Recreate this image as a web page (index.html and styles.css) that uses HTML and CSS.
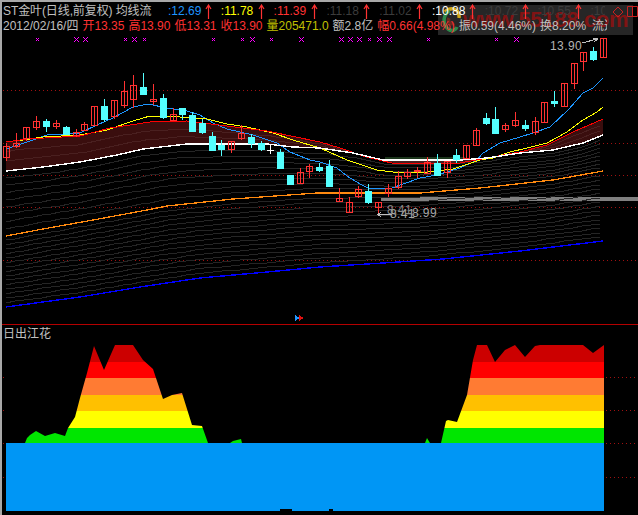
FILE: index.html
```html
<!DOCTYPE html>
<html lang="zh">
<head>
<meta charset="utf-8">
<title>金叶 K线</title>
<link rel="stylesheet" href="styles.css">
</head>
<body>
<div class="app">
  <section class="main">
    <header class="head">
      <div class="row row1">
        <div class="title">ST金叶(日线,前复权) 均线流</div>
        <div class="ma blue">:12.69<svg class="up" viewBox="0 0 7 15"><path d="M3.5 15V1M1 5L3.5 1L6 5"/></svg></div>
        <div class="ma yellow">:11.78<svg class="up" viewBox="0 0 7 15"><path d="M3.5 15V1M1 5L3.5 1L6 5"/></svg></div>
        <div class="ma red">:11.39<svg class="up" viewBox="0 0 7 15"><path d="M3.5 15V1M1 5L3.5 1L6 5"/></svg></div>
        <div class="ma dim">:11.18<svg class="up" viewBox="0 0 7 15"><path d="M3.5 15V1M1 5L3.5 1L6 5"/></svg></div>
        <div class="ma dim">:11.02<svg class="up" viewBox="0 0 7 15"><path d="M3.5 15V1M1 5L3.5 1L6 5"/></svg></div>
        <div class="ma white">:10.88<svg class="up" viewBox="0 0 7 15"><path d="M3.5 15V1M1 5L3.5 1L6 5"/></svg></div>
        <div class="ma dim">:10.72<svg class="up" viewBox="0 0 7 15"><path d="M3.5 15V1M1 5L3.5 1L6 5"/></svg></div>
        <div class="ma dim">:10.55<svg class="up" viewBox="0 0 7 15"><path d="M3.5 15V1M1 5L3.5 1L6 5"/></svg></div>
        <div class="ma dim last">:10.39</div>
        <svg class="tools" viewBox="0 0 26 12"><path d="M6 1L11 6L6 11L1 6Z"/><path d="M15.5 .5H25.5V10.5H15.5ZM20.5 .5V10.5"/></svg>
      </div>
      <div class="row row2">
        <span class="gray">2012/02/16/四</span>
        <span class="red">开13.35</span>
        <span class="red">高13.90</span>
        <span class="red">低13.31</span>
        <span class="red">收13.90</span>
        <span class="olive">量205471.0</span>
        <span class="gray">额2.8亿</span>
        <span class="red">幅0.66(4.98%)</span>
        <span class="gray">振0.59(4.46%)</span>
        <span class="gray">换8.20%</span>
        <span class="gray clip">流通</span>
      </div>
    </header>
    <svg id="kline" class="plot kline" viewBox="2 31 636 293"></svg>
    <span class="note high">13.90</span>
    <span class="note low back">8.41</span>
    <span class="note low front">8.41</span>
    <span class="note low range">8.99</span>
    <div class="mark">
      <svg class="logo" viewBox="0 0 20 28">
        <path class="swirl-y" d="M4 6C10 0 19 3 18 12"/>
        <path class="swirl-g" d="M9 5C2 8 1 18 7 23C11 26 15 24 16 21"/>
        <path class="swirl-d" d="M8 12C6 16 10 19 13 17"/>
      </svg>
      <span class="site">www.55188.com</span>
    </div>
  </section>
  <section class="sub">
    <div class="sub-title">日出江花</div>
    <svg id="flow" class="plot flow" viewBox="2 325 636 190"></svg>
  </section>
</div>
<script src="chart.js"></script>
</body>
</html>
```
FILE: styles.css
```css
* { box-sizing: border-box; }
html, body { margin: 0; padding: 0; background: #000; }
body { width: 638px; height: 515px; overflow: hidden; }
.app {
  width: 638px; height: 515px;
  background: #000;
  border-top: 2px solid #a8a8a8;
  border-left: 2px solid #a8a8a8;
  display: flex; flex-direction: column;
  font: 12px/14px "Liberation Sans", "Noto Sans CJK SC", sans-serif;
  color: #c0c0c0;
}
.main { position: relative; height: 322px; flex: none; }
.head { height: 29px; padding: 2px 0 0 1px; position: relative; z-index: 2; }
.row { display: flex; white-space: nowrap; height: 14px; }
.row1 { align-items: flex-start; position: relative; }
.row2 { gap: 4px; margin-top: 0; padding-top: 1px; height: 15px; }
.title { width: 165px; flex: none; letter-spacing: -.1px; }
.ma { width: 52.8px; flex: none; position: relative; }
.ma.last { width: 15px; overflow: hidden; }
.up { position: absolute; left: 37px; top: 0; width: 7px; height: 15px; fill: none; stroke: #ff3232; stroke-width: 1.2; }
.tools { width: 26px; height: 12px; margin: 2px 0 0 7px; flex: none; fill: none; stroke: #c82020; stroke-width: 1; }
.blue { color: #1e96ff; }
.yellow { color: #ffff00; }
.red { color: #ff3232; }
.white { color: #fff; }
.dim { color: #3c3c3c; }
.gray { color: #c0c0c0; }
.olive { color: #c0c000; }
.clip { width: 15px; overflow: hidden; flex: none; margin-left: 2px; }
.plot { display: block; width: 636px; shape-rendering: crispEdges; }
.kline { height: 293px; }
.flow { height: 190px; }
.note { position: absolute; color: #b4b4b4; letter-spacing: .4px; }
.high { left: 548px; top: 37px; }
.low { color: #a8a8a8; }
.back { left: 385px; top: 201px; opacity: .8; }
.front { left: 388px; top: 205px; }
.range { left: 410px; top: 204px; }
.mark {
  position: absolute; left: 436px; top: 3px; z-index: 1;
  width: 195px; height: 30px;
  background: #262626;
  display: flex; align-items: center;
  overflow: hidden;
}
.logo { width: 20px; height: 28px; flex: none; margin-left: 3px; fill: none; stroke-width: 3.5; }
.swirl-y { stroke: #d0a818; }
.swirl-g { stroke: #2c8a4a; }
.swirl-d { stroke: #6a2a20; }
.site {
  margin-left: 2px;
  font: bold 22px/28px "Liberation Sans", sans-serif;
  letter-spacing: -.3px;
  color: #801414;
}
.sub { position: relative; flex: 1; border-top: 1px solid #b40000; }
.sub-title { position: absolute; left: 1px; top: 2px; color: #c0c0c0; }
.guide { stroke: #a01010; stroke-dasharray: 1 3; fill: none; }
.grid { stroke: #252525; fill: none; }
.grid-in { stroke: #4a2020; fill: none; }
.l-blue { stroke: #1e96ff; fill: none; }
.l-yellow { stroke: #ffff00; fill: none; }
.l-red { stroke: #ff0000; fill: none; }
.l-white { stroke: #ffffff; fill: none; stroke-width: 1.4; }
.l-orange { stroke: #ff8a10; fill: none; stroke-width: 1.3; }
.l-deep { stroke: #0000ff; fill: none; stroke-width: 1.4; }
.band { fill: #3a0e0e; }
.band-g { fill: #1c361c; }
.bar { fill: #808080; }
.up-c { fill: none; stroke: #ff3232; }
.dn-c { fill: #54ffff; stroke: #54ffff; }
.wick-u { stroke: #ff3232; }
.wick-d { stroke: #54ffff; }
.wick-w { stroke: #ffffff; }
.star { stroke: #ff00ff; }
.pointer { stroke: #c0c0c0; fill: none; }
.tri-b { fill: #1e96ff; }
.tri-r { fill: #e01010; }
.flat { fill: #0096f5; }
.s1 { fill: #00e600; }
.s2 { fill: #ffff00; }
.s3 { fill: #ffc000; }
.s4 { fill: #ff7b33; }
.s5 { fill: #ff0000; }
.s6 { fill: #cc0000; }
.notch { fill: #000; }
```
FILE: chart.js
```js
// x, wick top, wick bottom, body top, body bottom, kind (u rise, d fall, w flat)
var candles = [
[6,143,161,146,157,'u'],[16,133,148,143,146,'u'],[26,127,141,127,138,'u'],[36,116,130,121,127,'u'],
[46,119,132,121,126,'d'],[56,120,129,123,126,'u'],[66,126,134,127,134,'d'],[76,129,137,132,135,'u'],
[84,122,131,124,130,'u'],[94,106,125,106,125,'u'],[104,99,122,106,119,'d'],[114,100,119,100,116,'u'],
[124,81,108,91,105,'u'],[133,75,108,85,99,'u'],[143,73,94,87,94,'d'],[153,84,105,99,101,'u'],
[163,94,119,98,117,'d'],[173,108,120,114,120,'u'],[182,108,120,108,114,'d'],[192,112,131,115,131,'d'],
[202,119,134,123,132,'d'],[212,132,150,136,150,'d'],[221,140,156,145,149,'d'],[231,141,153,141,149,'u'],
[241,125,140,133,138,'u'],[251,134,148,137,143,'d'],[261,141,151,143,149,'d'],[270,144,154,150,150,'w'],
[280,149,168,152,168,'d'],[290,175,184,175,184,'d'],[300,168,183,172,183,'u'],[309,164,178,166,171,'u'],
[319,163,172,167,170,'d'],[329,160,186,166,186,'d'],[339,188,201,198,201,'u'],[349,197,212,202,212,'u'],
[358,186,198,189,196,'u'],[368,184,204,191,202,'d'],[378,202,215,202,207,'u'],[388,184,197,188,193,'u'],
[398,171,189,176,187,'u'],[407,169,179,172,176,'u'],[417,167,178,170,170,'u'],[427,157,173,162,173,'u'],
[437,154,175,163,175,'d'],[447,161,178,161,172,'u'],[456,149,163,155,159,'d'],[466,145,158,145,158,'u'],
[476,128,145,130,145,'u'],[486,113,125,118,123,'d'],[495,107,133,119,133,'d'],[505,123,132,125,129,'u'],
[515,112,127,120,125,'u'],[525,120,131,125,128,'d'],[535,117,135,121,132,'u'],[544,102,122,102,122,'u'],
[554,91,107,101,103,'d'],[564,83,106,83,106,'u'],[574,63,89,63,83,'u'],[583,52,71,52,61,'u'],
[593,47,61,51,59,'d'],[603,38,57,38,57,'u']
];
var blue = [[6,149],[27,142],[47,135],[80,133],[97,125],[113,118],[133,107],[148,104],[167,108],[187,111],[200,115],[213,123],[227,129],[253,135],[277,143],[290,152],[310,160],[320,162],[337,168],[347,176],[360,184],[368,188],[392,188],[420,178],[437,175],[460,168],[477,160],[483,153],[500,143],[520,137],[533,133],[550,127],[568,110],[583,93],[593,88],[603,78]];
var yellow = [[17,141],[43,137],[80,135],[107,130],[133,121],[150,116],[180,117],[207,119],[227,124],[247,127],[273,133],[293,140],[320,148],[347,160],[377,170],[393,172],[420,173],[453,169],[480,160],[493,158],[510,152],[527,148],[547,143],[567,132],[583,120],[597,112],[603,107]];
var red = [[6,142],[27,139],[80,136],[110,128],[150,122],[187,121],[227,126],[267,131],[320,142],[340,148],[363,156],[383,161],[392,163],[460,163],[487,158],[520,152],[547,145],[573,132],[603,119]];
var white = [[6,171],[43,167],[80,162],[117,155],[143,149],[187,144],[267,144],[293,147],[320,148],[353,153],[383,160],[460,160],[487,158],[520,153],[553,150],[583,143],[603,135]];
var orange = [[6,236],[43,229],[93,220],[147,210],[167,206],[233,199],[317,193],[420,193],[480,188],[553,180],[603,171]];
var deep = [[6,307],[80,297],[140,287],[200,278],[267,272],[320,267],[383,263],[443,259],[520,251],[603,241]];
var stars = [[37,1],[76,2],[85,2],[125,1],[134,2],[144,1],[213,1],[242,1],[252,2],[271,1],[301,2],[340.5,2],[350,2],[359,2],[369,1],[379,2],[389,2],[428,1],[496,1],[516,2]];

function at(c, x) {
  for (var i = 1; i < c.length; i++) {
    if (x <= c[i][0]) {
      return c[i-1][1] + (c[i][1]-c[i-1][1]) * (x-c[i-1][0]) / (c[i][0]-c[i-1][0]);
    }
  }
  return c[c.length-1][1];
}
function pts(c) { return c.map(function (p) { return p[0] + ',' + p[1]; }).join(' '); }
function poly(cls, c) { return '<polyline class="' + cls + '" points="' + pts(c) + '"/>'; }
function mix(a, b, t) {
  var out = [];
  for (var x = 6; x <= 603; x += 9) { out.push([x, Math.round(at(a, x) * (1-t) + at(b, x) * t)]); }
  return out;
}

var k = '';
[90, 143, 175, 207, 260].forEach(function (y) {
  k += '<line class="guide" x1="3" x2="638" y1="' + (y+.5) + '" y2="' + (y+.5) + '"/>';
});
k += '<polygon class="band" points="' + pts(red) + ' ' + pts(white.slice().reverse()) + '"/>';
k += '<polygon class="band-g" points="385,157 465,157 465,163 385,162"/>';
k += '<rect class="bar" x="381" y="197" width="257" height="4"/>';
[.33, .66].forEach(function (t) { k += poly('grid-in', mix(red, white, t)); });
for (var i = 1; i <= 8; i++) { k += poly('grid', mix(white, orange, i/9)); }
for (var j = 1; j <= 15; j++) { k += poly('grid', mix(orange, deep, j/16)); }
k += poly('l-orange', orange) + poly('l-deep', deep);
k += poly('l-blue', blue) + poly('l-yellow', yellow) + poly('l-red', red) + poly('l-white', white);
candles.forEach(function (c) {
  var x = c[0], kind = c[5];
  k += '<line class="wick-' + kind + '" x1="' + (x+.5) + '" x2="' + (x+.5) + '" y1="' + c[1] + '" y2="' + c[2] + '"/>';
  if (kind === 'w') {
    k += '<line class="wick-w" x1="' + (x-3) + '" x2="' + (x+4) + '" y1="' + (c[3]+.5) + '" y2="' + (c[3]+.5) + '"/>';
  } else {
    var h = Math.max(c[4]-c[3], 1);
    k += '<rect class="' + (kind === 'u' ? 'up-c' : 'dn-c') + '" x="' + (x-2.5) + '" y="' + (c[3]+.5) + '" width="6" height="' + h + '"/>';
  }
});
stars.forEach(function (s) {
  var x = Math.round(s[0]) + .5, y = 39.5, r = s[1] + .5;
  k += '<path class="star" d="M' + (x-r) + ' ' + (y-r) + 'L' + (x+r) + ' ' + (y+r) + 'M' + (x+r) + ' ' + (y-r) + 'L' + (x-r) + ' ' + (y+r) + '"/>';
});
k += '<path class="pointer" d="M582 43L597 39M593 38L598 39L594 42"/>';
k += '<path class="pointer" d="M378 214.5H392M381 212L378 214.5L381 217"/>';
k += '<polygon class="tri-b" points="295,315 300,318 295,321"/><polygon class="tri-r" points="299,315 304,318 299,321"/>';
document.getElementById('kline').innerHTML = k;

var hills = [
[[25,443],[27,438],[30,435],[36,431],[45,436],[55,433],[65,436],[68,428],[75,417],[80,398],[87,373],[94,346],[104,370],[115,345],[133,345],[143,360],[153,369],[163,399],[172,395],[182,393],[192,425],[202,426],[208,443]],
[[230,443],[233,441],[241,439],[242,443]],
[[425,443],[427,438],[430,443]],
[[441,443],[446,421],[448,420],[457,422],[467,395],[473,360],[477,345],[487,345],[495,362],[505,350],[515,345],[525,357],[535,346],[540,345],[583,345],[593,353],[604,345],[604,443]]
];
var f = '<defs><clipPath id="hill">';
hills.forEach(function (h) { f += '<polygon points="' + pts(h) + '"/>'; });
f += '</clipPath></defs>';
[377, 410, 443, 477].forEach(function (y) {
  f += '<line class="guide" x1="606" x2="638" y1="' + (y+.5) + '" y2="' + (y+.5) + '"/>';
  f += '<line class="guide" x1="3" x2="5" y1="' + (y+.5) + '" y2="' + (y+.5) + '"/>';
});
f += '<g clip-path="url(#hill)">';
[[345,362,'s6'],[362,378,'s5'],[378,395,'s4'],[395,411,'s3'],[411,428,'s2'],[428,443,'s1']].forEach(function (b) {
  f += '<rect class="' + b[2] + '" x="6" y="' + b[0] + '" width="598" height="' + (b[1]-b[0]) + '"/>';
});
f += '</g>';
f += '<rect class="flat" x="6" y="443" width="598" height="68"/>';
f += '<rect class="notch" x="280" y="509" width="12" height="2"/><rect class="notch" x="329" y="509" width="4" height="2"/>';
document.getElementById('flow').innerHTML = f;
```
